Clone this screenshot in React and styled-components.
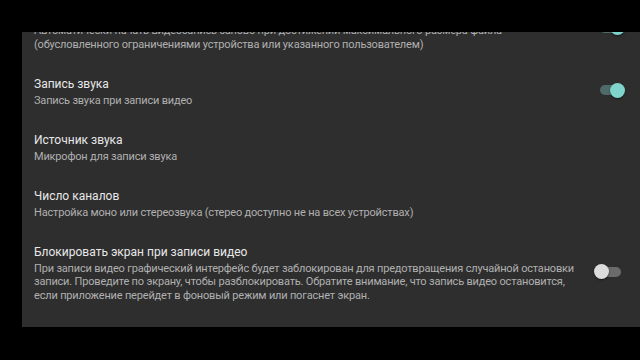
import React, { useLayoutEffect, useRef } from "react";
import styled, { createGlobalStyle } from "styled-components";

const settings = [
  {
    title: "Перезапуск при достижении макс. размера файла",
    summary:
      "Автоматически начать видеозапись заново при достижении максимального размера файла (обусловленного ограничениями устройства или указанного пользователем)",
    toggle: true,
  },
  {
    title: "Запись звука",
    summary: "Запись звука при записи видео",
    toggle: true,
  },
  {
    title: "Источник звука",
    summary: "Микрофон для записи звука",
  },
  {
    title: "Число каналов",
    summary: "Настройка моно или стереозвука (стерео доступно не на всех устройствах)",
  },
  {
    title: "Блокировать экран при записи видео",
    summary:
      "При записи видео графический интерфейс будет заблокирован для предотвращения случайной остановки записи. Проведите по экрану, чтобы разблокировать. Обратите внимание, что запись видео остановится, если приложение перейдет в фоновый режим или погаснет экран.",
    toggle: false,
  },
  {
    title: "Настройки битрейта видео",
    summary: "Битрейт видео по умолчанию",
  },
];

function App() {
  const listRef = useRef(null);

  // the list is shown scrolled a little way down
  useLayoutEffect(() => {
    if (listRef.current) listRef.current.scrollTop = 37;
  }, []);

  return (
    <Screen>
      <GlobalStyle />
      <Panel ref={listRef}>
        {settings.map((item) => (
          <Row key={item.title}>
            <TextBlock>
              <Title>{item.title}</Title>
              <Summary>{item.summary}</Summary>
            </TextBlock>
            {item.toggle !== undefined && (
              <Switch>
                <Track on={item.toggle ? 1 : 0} />
                <Knob on={item.toggle ? 1 : 0} />
              </Switch>
            )}
          </Row>
        ))}
      </Panel>
    </Screen>
  );
}

const GlobalStyle = createGlobalStyle`
  html, body {
    margin: 0;
    padding: 0;
    background: #000;
  }
  body {
    font-family: Roboto, "Noto Sans", sans-serif;
  }
`;

const Screen = styled.div`
  width: 640px;
  height: 360px;
  background: #000;
  padding: 32px 0 0 22px;
  box-sizing: border-box;
  overflow: hidden;
`;

const Panel = styled.div`
  height: 295px;
  background: #2e2e2e;
  overflow: hidden;
  display: flex;
  flex-direction: column;
`;

const Row = styled.div`
  display: flex;
  align-items: center;
  gap: 10px;
  padding: 9px 14px 13.5px 12px;
  flex-shrink: 0;
`;

const TextBlock = styled.div`
  width: 550px;
  display: flex;
  flex-direction: column;
`;

const Title = styled.div`
  font-size: 12px;
  line-height: 20px;
  color: #e8e8e8;
`;

const Summary = styled.div`
  font-size: 11px;
  line-height: 13.5px;
  letter-spacing: -0.18px;
  color: #b0b0b0;
`;

const Switch = styled.div`
  position: relative;
  width: 31px;
  height: 15px;
  flex-shrink: 0;
`;

const Track = styled.div`
  position: absolute;
  left: 6px;
  top: 2.5px;
  width: 21px;
  height: 10px;
  border-radius: 5px;
  background: ${(props) => (props.on ? "#4f6b69" : "#6b6b6b")};
`;

const Knob = styled.div`
  position: absolute;
  top: 0;
  left: ${(props) => (props.on ? "16px" : "0")};
  width: 15px;
  height: 15px;
  border-radius: 50%;
  background: ${(props) => (props.on ? "#7fd4cc" : "#dcdcdc")};
  box-shadow: 0 1px 2px rgba(0, 0, 0, 0.5);
`;

export default App;
